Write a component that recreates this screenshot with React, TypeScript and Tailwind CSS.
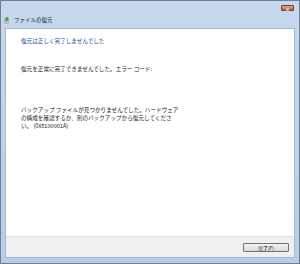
import { useState } from 'react';

const jp = { fontFamily: '"Noto Sans CJK JP", "Noto Sans", sans-serif' };

function RestoreIcon() {
  return (
    <svg width="6" height="8" viewBox="0 0 6 8" className="shrink-0">
      <rect x="0.5" y="2" width="4" height="5.5" rx="0.5" fill="#8a9a8e" />
      <path d="M1 3 L3 0.5 L5 3 Z" fill="#3f9b3a" />
      <rect x="2.4" y="2.5" width="1.2" height="2.5" fill="#3f9b3a" />
      <rect x="1" y="5.5" width="3" height="1.2" fill="#d9dfe2" />
    </svg>
  );
}

const lines = [
  'バックアップ ファイルが見つかりませんでした。ハードウェア',
  'の構成を確認するか、別のバックアップから復元してくださ',
  'い。 (0x8100001A)',
];

export default function App() {
  const [done, setDone] = useState(false);

  return (
    <div
      className="w-[300px] h-[264px] flex flex-col bg-gradient-to-b from-[#c6d8ee] to-[#b9cde6] border border-[#6f7f92] overflow-hidden"
      style={jp}
    >
      {/* title bar */}
      <div className="h-[27px] flex items-start shrink-0">
        <div className="flex items-center gap-[4px] pl-[3px] pt-[15px]">
          <RestoreIcon />
          <span className="text-[5.5px] leading-[8px] text-[#1b2430]">ファイルの復元</span>
        </div>
        <div className="ml-auto mr-[5px] mt-[4px] w-[13px] h-[6px] rounded-[1px] border border-[#7a3b32] bg-gradient-to-b from-[#e3a79c] to-[#c8523f] flex items-center justify-center">
          <span className="text-white text-[5px] leading-none font-bold">×</span>
        </div>
      </div>

      {/* client area */}
      <div className="flex-1 mx-[4px] flex flex-col bg-white border border-[#a6b9d1]">
        <div className="flex-1 pl-[15px] pt-[8px] text-[5.6px] leading-[8px] text-[#222]">
          <p className="text-[#2449a3]">復元は正しく完了しませんでした</p>
          <p className="mt-[20px]">復元を正常に完了できませんでした。エラー コード:</p>
          <div className="mt-[33px]">
            {lines.map((l) => (
              <p key={l} className="whitespace-pre">{l}</p>
            ))}
          </div>
        </div>
        <div className="h-[21px] shrink-0 bg-[#f0f0f0] border-t border-[#dfdfdf] flex items-center justify-end pr-[5px]">
          <button
            onClick={() => setDone(true)}
            className={`w-[46px] h-[9px] rounded-[1px] border border-[#707070] bg-gradient-to-b from-[#f3f3f3] to-[#dadada] flex items-center justify-center text-[5px] leading-none text-[#222] ${
              done ? 'opacity-80' : ''
            }`}
          >
            完了(F)
          </button>
        </div>
      </div>
      <div className="h-[5px] shrink-0" />
    </div>
  );
}
